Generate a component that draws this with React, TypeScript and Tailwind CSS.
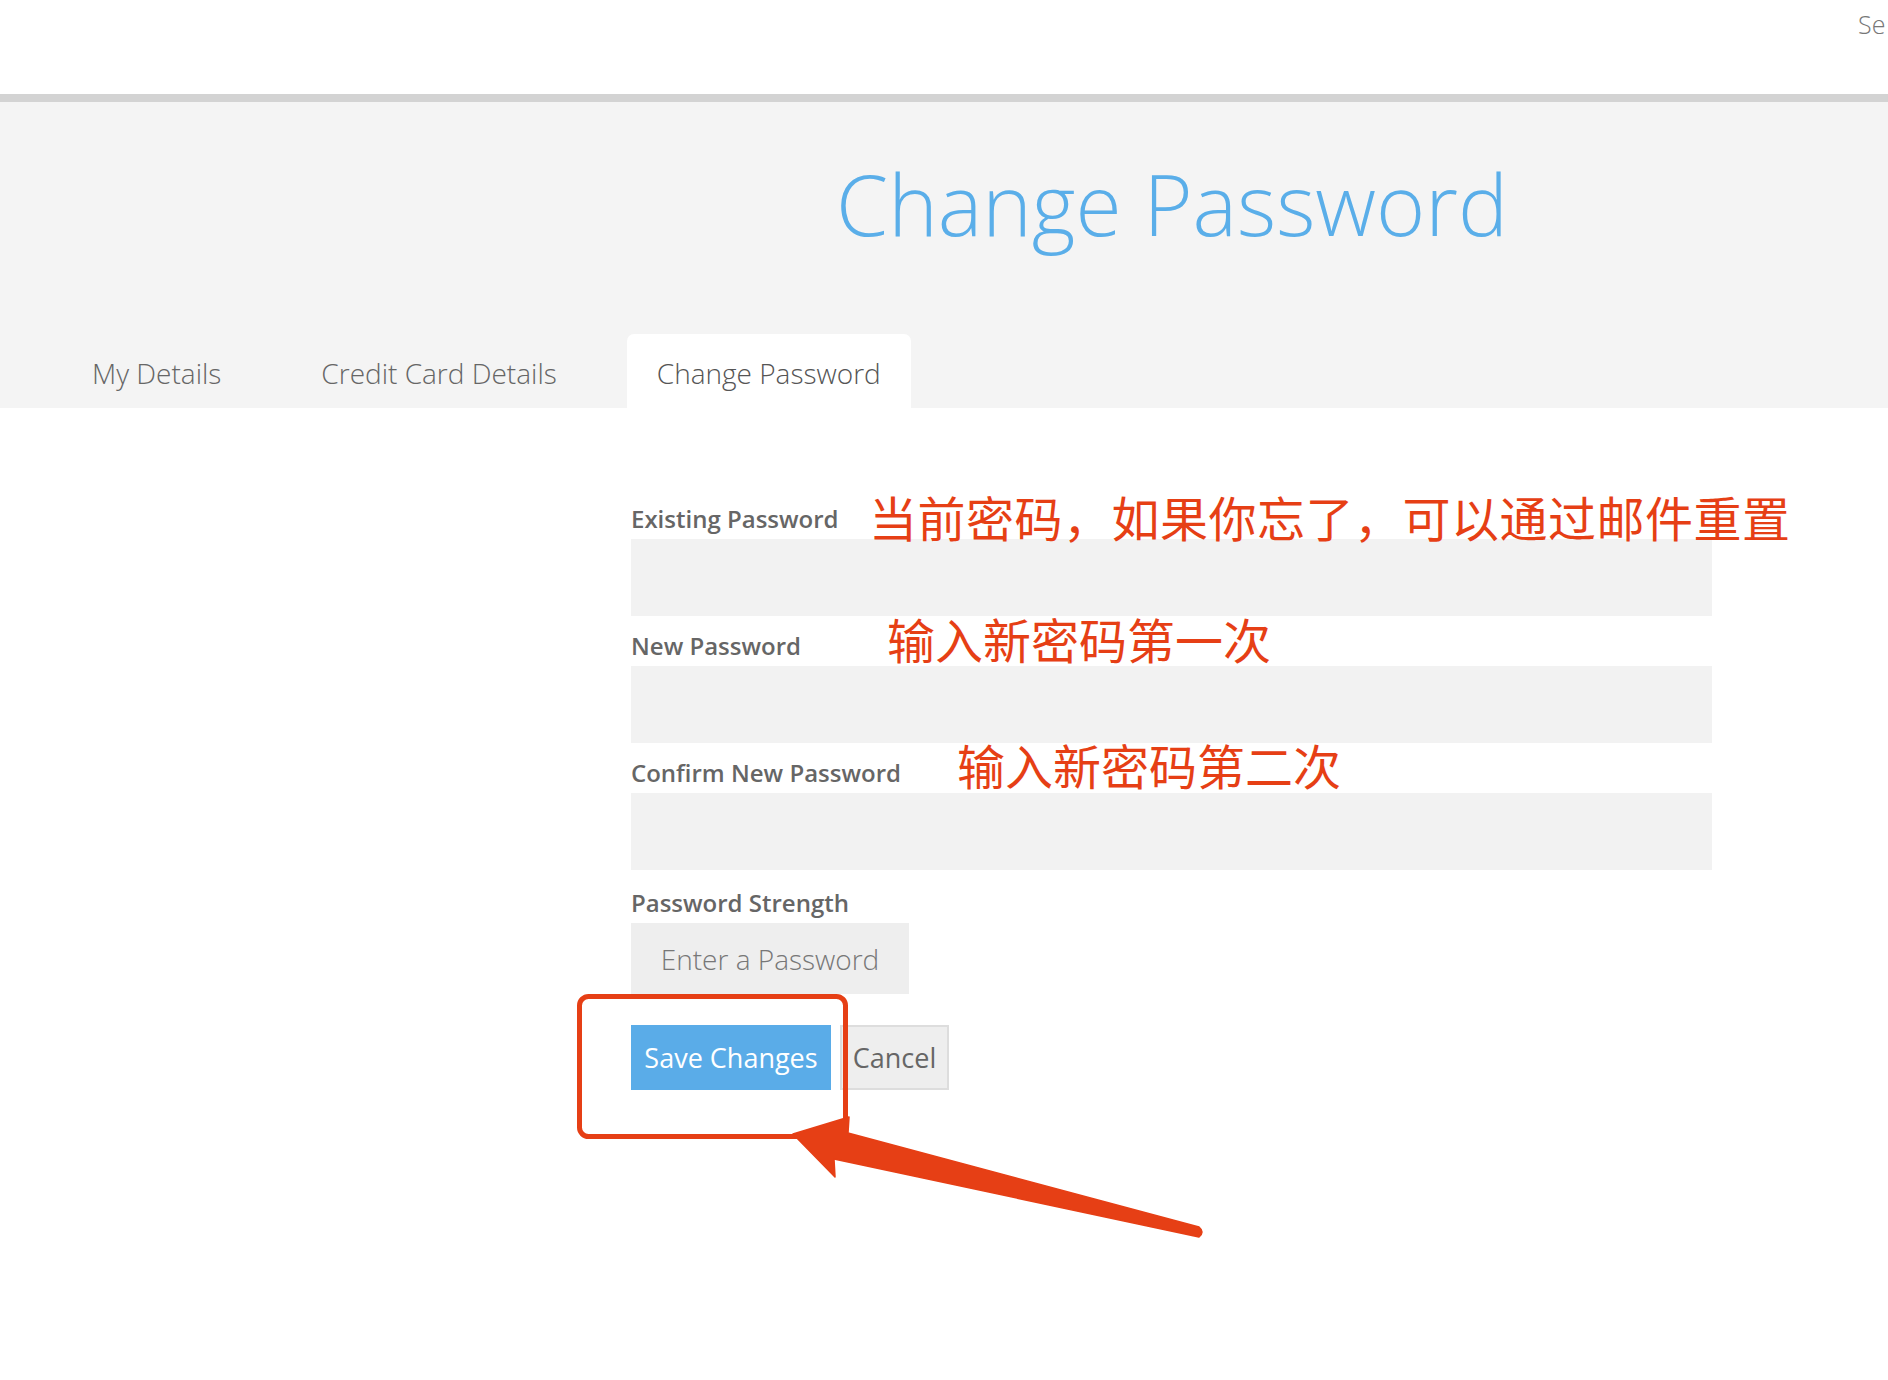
import React from "react";

const Arrow = () => (
  <svg
    className="absolute left-0 top-0 pointer-events-none"
    width={1888}
    height={1380}
    viewBox="0 0 1888 1380"
  >
    <rect x={579.5} y={996.5} width={266} height={140} rx={9} fill="none" stroke="#e63f15" strokeWidth={5} />
    <path
      d="M793 1134 L849 1117 L848 1133 L1199 1227 Q1205 1232 1199 1237 L834 1159 L835 1177 Z"
      fill="#e63f15"
      stroke="#e63f15"
      strokeWidth={1.5}
      strokeLinejoin="round"
    />
  </svg>
);

const cjk = { fontFamily: '"Noto Sans CJK SC", "Noto Sans", sans-serif' };

export default function App() {
  return (
    <div
      className="relative w-[1888px] h-[1380px] overflow-hidden bg-white"
      style={{ fontFamily: '"Open Sans", "Liberation Sans", sans-serif' }}
    >
      <header className="h-[94px] flex pt-[12px]">
        <span className="ml-[1858px] whitespace-nowrap text-[25px] leading-none font-light text-[#777777]">
          Se
        </span>
      </header>
      <div className="h-[8px] bg-[#d3d3d3]" />
      <section className="h-[306px] bg-[#f4f4f4] flex flex-col">
        <h1 className="pt-[60px] pl-[836px] text-[84px] leading-none font-light text-[#5aaee9] whitespace-nowrap">
          Change Password
        </h1>
        <nav className="mt-auto flex items-end gap-[40px] pl-[62px]">
          <div className="h-[74px] px-[30px] pt-[25px] text-[28px] leading-none font-light text-[#666666] whitespace-nowrap">
            My Details
          </div>
          <div className="h-[74px] px-[30px] pt-[25px] text-[28px] leading-none font-light text-[#666666] whitespace-nowrap">
            Credit Card Details
          </div>
          <div className="h-[74px] px-[30px] pt-[25px] text-[28px] leading-none font-light text-[#555555] bg-white rounded-t-[7px] whitespace-nowrap">
            Change Password
          </div>
        </nav>
      </section>

      <form className="pl-[631px] pt-[96px] w-[1712px] flex flex-col">
        <label className="text-[24px] leading-[29px] font-semibold text-[#666666] mb-[6px]">Existing Password</label>
        <div className="h-[77px] bg-[#f2f2f2]" />
        <label className="mt-[15px] text-[24px] leading-[29px] font-semibold text-[#666666] mb-[6px]">New Password</label>
        <div className="h-[77px] bg-[#f2f2f2]" />
        <label className="mt-[15px] text-[24px] leading-[29px] font-semibold text-[#666666] mb-[6px]">Confirm New Password</label>
        <div className="h-[77px] bg-[#f2f2f2]" />
        <label className="mt-[18px] text-[24px] leading-[29px] font-semibold text-[#666666] mb-[6px]">Password Strength</label>
        <div className="flex">
          <div className="w-[278px] h-[71px] bg-[#eeeeee] flex items-center justify-center text-[28px] font-light text-[#777777]">
            Enter a Password
          </div>
        </div>
        <div className="mt-[31px] flex gap-[9px]">
          <button type="button" className="w-[200px] h-[65px] bg-[#5aace8] text-white text-[27px] leading-none">
            Save Changes
          </button>
          <button type="button" className="w-[109px] h-[65px] bg-[#eeeeee] border-2 border-[#dddddd] text-[#666666] text-[27px] leading-none">
            Cancel
          </button>
        </div>
      </form>

      <div className="absolute left-[869px] top-[492px] text-[48px] tracking-[0.5px] leading-none text-[#e63f15] whitespace-nowrap" style={cjk}>
        当前密码，如果你忘了，可以通过邮件重置
      </div>
      <div className="absolute left-[887px] top-[614px] text-[48px] leading-none text-[#e63f15] whitespace-nowrap" style={cjk}>
        输入新密码第一次
      </div>
      <div className="absolute left-[957px] top-[740px] text-[48px] leading-none text-[#e63f15] whitespace-nowrap" style={cjk}>
        输入新密码第二次
      </div>

      <Arrow />
    </div>
  );
}
